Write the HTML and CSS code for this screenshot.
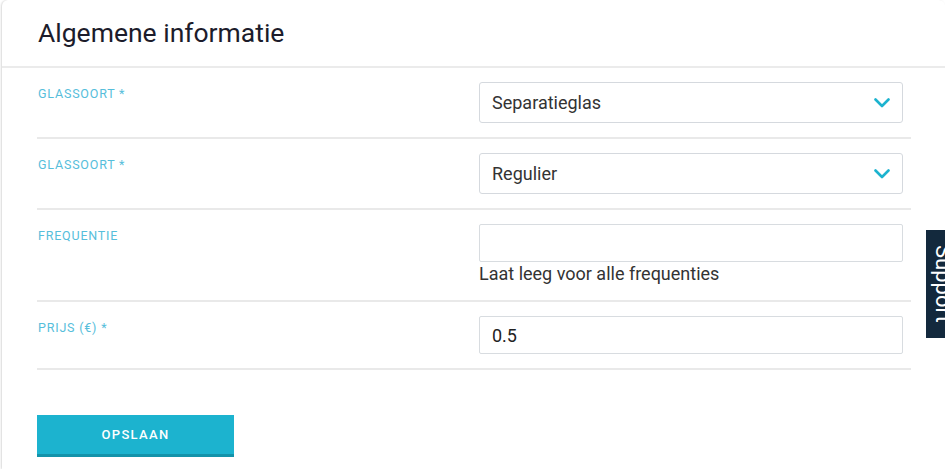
FILE: index.html
```html
<!DOCTYPE html>
<html lang="nl">
<head>
    <meta charset="UTF-8">
    <meta name="viewport" content="width=device-width, initial-scale=1.0">
    <title>Algemene informatie</title>
    <link rel="stylesheet" href="styles.css">
</head>
<body>
    <div class="card">
        <div class="card-header">
            <h1>Algemene informatie</h1>
        </div>
        <form class="card-body">
            <div class="form-row">
                <label for="glassoort">Glassoort *</label>
                <div class="field">
                    <div class="select" id="glassoort">
                        <span>Separatieglas</span>
                        <svg class="chevron" viewBox="0 0 16 10" width="16" height="10">
                            <path d="M1.5 1.5 L8 8 L14.5 1.5" fill="none" stroke="#1cb3cf" stroke-width="2.6" stroke-linecap="round" stroke-linejoin="round"/>
                        </svg>
                    </div>
                </div>
            </div>
            <div class="form-row">
                <label for="glassoort2">Glassoort *</label>
                <div class="field">
                    <div class="select" id="glassoort2">
                        <span>Regulier</span>
                        <svg class="chevron" viewBox="0 0 16 10" width="16" height="10">
                            <path d="M1.5 1.5 L8 8 L14.5 1.5" fill="none" stroke="#1cb3cf" stroke-width="2.6" stroke-linecap="round" stroke-linejoin="round"/>
                        </svg>
                    </div>
                </div>
            </div>
            <div class="form-row">
                <label for="frequentie">Frequentie</label>
                <div class="field">
                    <input type="text" id="frequentie" value="">
                    <div class="help">Laat leeg voor alle frequenties</div>
                </div>
            </div>
            <div class="form-row">
                <label for="prijs">Prijs (€) *</label>
                <div class="field">
                    <input type="text" id="prijs" value="0.5">
                </div>
            </div>
            <div class="actions">
                <button type="submit">Opslaan</button>
            </div>
        </form>
    </div>

    <div class="support-tab"><span>Support</span></div>
</body>
</html>
```

FILE: styles.css
```css
* {
    box-sizing: border-box;
}
body {
    margin: 0;
    background-color: #fff;
    font-family: Roboto, "Noto Sans", Arial, sans-serif;
    color: #333;
    overflow: hidden;
}
.card {
    margin-left: 2px;
    min-height: 100vh;
    background-color: #fff;
    border-radius: 6px 6px 0 0;
    box-shadow: -1px 0 2px rgba(0, 0, 0, 0.15);
}
.card-header {
    height: 68px;
    padding: 0 36px;
    border-bottom: 2px solid #ebebeb;
}
.card-header h1 {
    margin: 0;
    padding-top: 18px;
    font-size: 26.5px;
    font-weight: 400;
    line-height: 30px;
    color: #1c1c2b;
}
.card-body {
    padding: 0 34px 0 35px;
}
.form-row {
    display: flex;
    padding: 14px 0;
    border-bottom: 2px solid #e9e9e9;
}
.form-row label {
    flex: 1;
    padding: 3px 0 0 1px;
    font-size: 12.5px;
    line-height: 17px;
    letter-spacing: 0.8px;
    text-transform: uppercase;
    color: #56bedb;
}
.field {
    width: 424px;
    margin-right: 8px;
}
.select {
    display: flex;
    align-items: center;
    justify-content: space-between;
    height: 41px;
    padding: 0 12px;
    border: 1px solid #d5d9de;
    border-radius: 3px;
    font-size: 18px;
    color: #333;
}
.chevron {
    display: block;
}
.field input {
    display: block;
    width: 100%;
    height: 38px;
    padding: 0 12px;
    border: 1px solid #d8dce0;
    border-radius: 2px;
    font-family: inherit;
    font-size: 18px;
    color: #222;
    outline: none;
}
.help {
    font-size: 18px;
    line-height: 24px;
    color: #333;
}
.actions {
    padding-top: 45px;
}
.actions button {
    width: 197px;
    height: 42px;
    border: none;
    border-bottom: 3px solid #1493aa;
    background-color: #1cb3cf;
    color: #fff;
    font-family: inherit;
    font-size: 13px;
    font-weight: 500;
    letter-spacing: 1.3px;
    text-transform: uppercase;
    cursor: pointer;
}
.support-tab {
    position: fixed;
    top: 230px;
    right: -21px;
    width: 40px;
    height: 108px;
    padding-left: 3px;
    background-color: #13293d;
    color: #fff;
    display: flex;
    align-items: center;
}
.support-tab span {
    writing-mode: vertical-rl;
    font-size: 22px;
    line-height: 28px;
}
```
